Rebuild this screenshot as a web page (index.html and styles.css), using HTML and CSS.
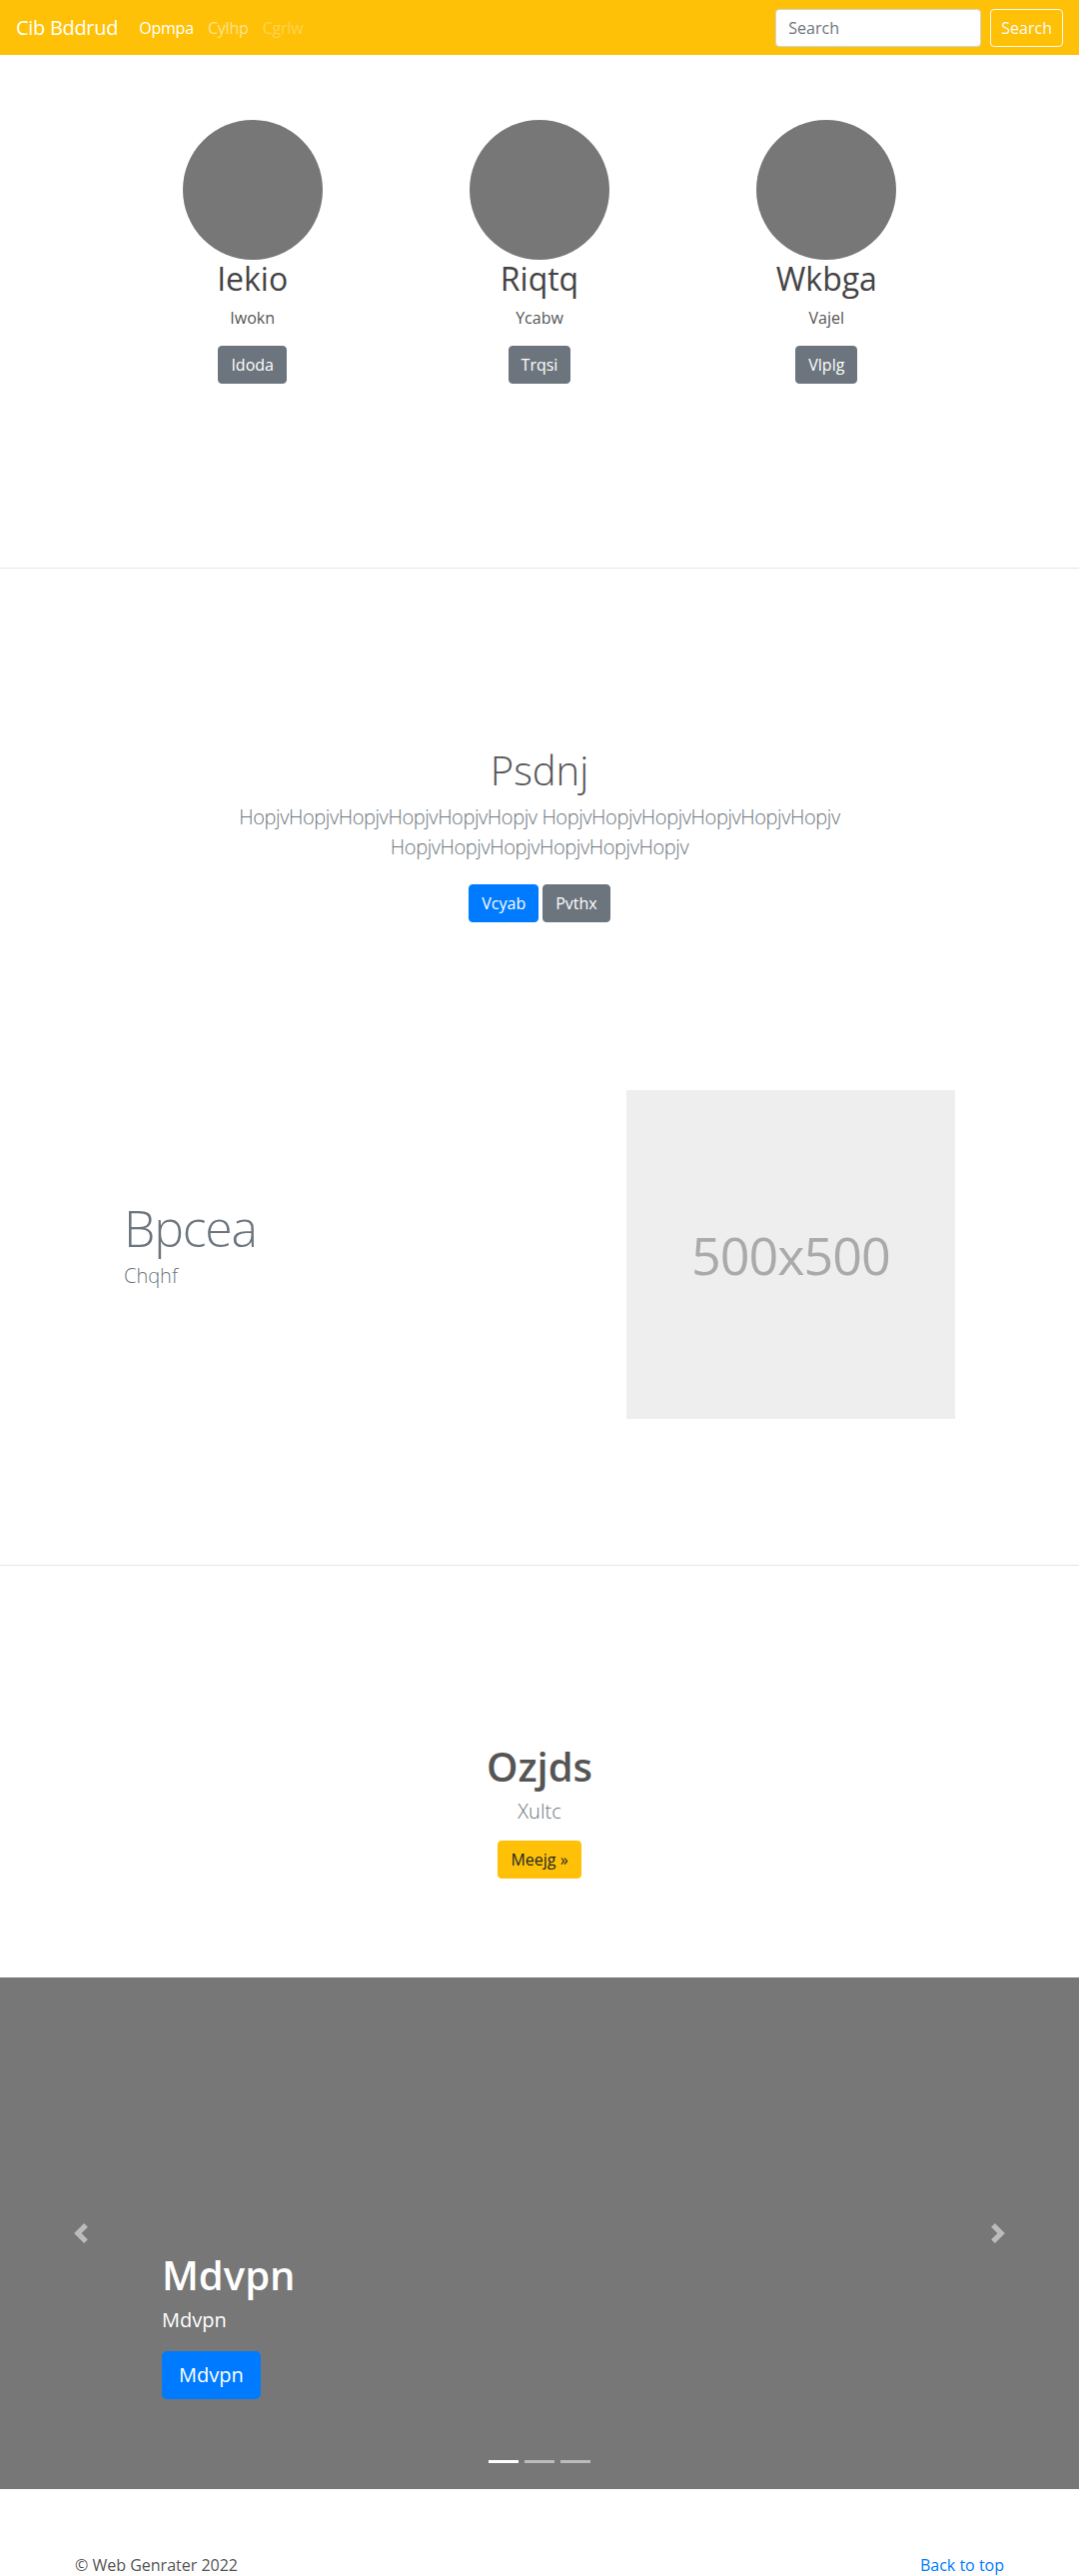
FILE: index.html
```html
<!DOCTYPE html>
<html lang="en">
<head>
<meta charset="utf-8">
<title>Cib Bddrud</title>
<link rel="stylesheet" href="styles.css">
</head>
<body>
<header class="navbar">
  <a class="brand" href="#">Cib Bddrud</a>
  <nav class="nav">
    <a class="nav-link active" href="#">Opmpa</a>
    <a class="nav-link" href="#">Cylhp</a>
    <a class="nav-link disabled" href="#">Cgrlw</a>
  </nav>
  <form class="search">
    <input class="search-input" type="text" placeholder="Search">
    <button class="btn btn-outline" type="button">Search</button>
  </form>
</header>

<section class="team">
  <div class="wrap team-row">
    <div class="member">
      <div class="avatar"></div>
      <h2 class="member-name">Iekio</h2>
      <p class="member-role">Iwokn</p>
      <a class="btn btn-secondary" href="#">Idoda</a>
    </div>
    <div class="member">
      <div class="avatar"></div>
      <h2 class="member-name">Riqtq</h2>
      <p class="member-role">Ycabw</p>
      <a class="btn btn-secondary" href="#">Trqsi</a>
    </div>
    <div class="member">
      <div class="avatar"></div>
      <h2 class="member-name">Wkbga</h2>
      <p class="member-role">Vajel</p>
      <a class="btn btn-secondary" href="#">Vlplg</a>
    </div>
  </div>
</section>

<section class="intro">
  <div class="wrap">
    <h1 class="intro-title">Psdnj</h1>
    <p class="lead intro-lead">HopjvHopjvHopjvHopjvHopjvHopjv HopjvHopjvHopjvHopjvHopjvHopjv HopjvHopjvHopjvHopjvHopjvHopjv</p>
    <div class="intro-actions">
      <a class="btn btn-primary" href="#">Vcyab</a>
      <a class="btn btn-secondary" href="#">Pvthx</a>
    </div>
    <div class="featurette">
      <div class="featurette-text">
        <h2 class="featurette-heading">Bpcea</h2>
        <p class="lead muted">Chqhf</p>
      </div>
      <div class="featurette-media">
        <div class="placeholder"><span>500x500</span></div>
      </div>
    </div>
  </div>
</section>

<section class="cta">
  <h1 class="cta-title">Ozjds</h1>
  <p class="lead muted cta-lead">Xultc</p>
  <a class="btn btn-warning" href="#">Meejg »</a>
</section>

<section class="carousel">
  <div class="carousel-caption">
    <h1 class="caption-title">Mdvpn</h1>
    <p class="caption-text">Mdvpn</p>
    <a class="btn btn-primary btn-lg" href="#">Mdvpn</a>
  </div>
  <a class="control control-prev" href="#" aria-label="Previous">
    <svg viewBox="0 0 8 8" width="20" height="20"><path fill="#fff" d="M5.25 0l-4 4 4 4 1.5-1.5L4.25 4l2.5-2.5L5.25 0z"/></svg>
  </a>
  <a class="control control-next" href="#" aria-label="Next">
    <svg viewBox="0 0 8 8" width="20" height="20"><path fill="#fff" d="M2.75 0l-1.5 1.5L3.75 4l-2.5 2.5L2.75 8l4-4-4-4z"/></svg>
  </a>
  <ol class="indicators">
    <li class="indicator on"></li>
    <li class="indicator"></li>
    <li class="indicator"></li>
  </ol>
</section>

<footer class="footer">
  <p class="copy">© Web Genrater 2022</p>
  <a class="back" href="#">Back to top</a>
</footer>
</body>
</html>
```

FILE: styles.css
```css
* { box-sizing: border-box; }

html, body {
  margin: 0;
  padding: 0;
}

body {
  font-family: "Open Sans", "Noto Sans", "DejaVu Sans", sans-serif;
  font-size: 16px;
  line-height: 1.5;
  color: #444;
  background: #fff;
}

a { text-decoration: none; }

h1, h2, p { margin: 0; }

.wrap {
  width: 862px;
  margin: 0 auto;
}

/* buttons */
.btn {
  display: inline-block;
  font-size: 16px;
  line-height: 24px;
  padding: 6px 12px;
  border: 1px solid transparent;
  border-radius: 4px;
  color: #fff;
  font-family: inherit;
  cursor: pointer;
}
.btn-secondary { background: #6c757d; border-color: #6c757d; }
.btn-primary { background: #007bff; border-color: #007bff; }
.btn-warning { background: #ffc107; border-color: #ffc107; color: #212529; }
.btn-lg { font-size: 20px; line-height: 30px; padding: 8px 16px; border-radius: 5px; }
.btn-outline { background: transparent; border-color: #f8f9fa; color: #f8f9fa; }

.lead {
  font-size: 20px;
  font-weight: 300;
  line-height: 30px;
}
.muted { color: #6c757d; }

/* navbar */
.navbar {
  height: 55px;
  background: #ffc107;
  display: flex;
  align-items: center;
  padding: 0 16px;
}
.brand {
  color: #fff;
  font-size: 20px;
  line-height: 30px;
  margin-right: 14px;
  letter-spacing: -0.3px;
}
.nav {
  display: flex;
  flex: 1;
}
.nav-link {
  color: rgba(255, 255, 255, 0.55);
  padding: 0 7px;
  font-size: 16px;
  letter-spacing: -0.2px;
}
.nav-link.active { color: #fff; }
.nav-link.disabled { color: rgba(255, 255, 255, 0.3); }
.search {
  display: flex;
  align-items: center;
  gap: 9px;
}
.search-input {
  width: 206px;
  height: 38px;
  padding: 6px 12px;
  font-size: 16px;
  font-family: inherit;
  border: 1px solid #ced4da;
  border-radius: 4px;
  color: #495057;
  background: #fff;
}
.search-input::placeholder { color: #6c757d; }
.search .btn { height: 38px; padding: 6px 10px; }

/* team */
.team {
  height: 514px;
  padding-top: 65px;
  border-bottom: 1px solid #e5e5e5;
}
.team-row {
  display: grid;
  grid-template-columns: repeat(3, 1fr);
}
.member {
  display: flex;
  flex-direction: column;
  align-items: center;
  text-align: center;
}
.avatar {
  width: 140px;
  height: 140px;
  border-radius: 50%;
  background: #777;
}
.member-name {
  font-size: 32px;
  font-weight: 400;
  line-height: 38px;
  margin-bottom: 8px;
  color: #444;
}
.member-role {
  margin-bottom: 16px;
  color: #555;
}

/* intro */
.intro {
  padding-top: 178px;
  padding-bottom: 146px;
  border-bottom: 1px solid #e5e5e5;
}
.intro-title {
  text-align: center;
  font-size: 40px;
  font-weight: 300;
  line-height: 48px;
  color: #555;
  margin-bottom: 8px;
}
.intro-lead {
  text-align: center;
  color: #6c757d;
  max-width: 720px;
  margin: 0 auto 22px;
  letter-spacing: -0.4px;
}
.intro-actions {
  display: flex;
  justify-content: center;
  gap: 4px;
}
.featurette {
  margin-top: 168px;
  display: grid;
  grid-template-columns: 7fr 5fr;
  align-items: center;
}
.featurette-text { padding: 0 15px; }
.featurette-heading {
  font-size: 50px;
  font-weight: 300;
  line-height: 50px;
  letter-spacing: -1.2px;
  color: #6c757d;
  margin-bottom: 8px;
}
.featurette-text .lead { margin-bottom: 16px; }
.featurette-media { padding: 0 15px; }
.placeholder {
  width: 329px;
  height: 329px;
  background: #eee;
  display: flex;
  align-items: center;
  justify-content: center;
  color: #aaa;
  font-size: 52px;
  font-weight: 400;
  letter-spacing: -1px;
}

/* cta */
.cta {
  padding-top: 177px;
  padding-bottom: 99px;
  text-align: center;
}
.cta-title {
  font-size: 40px;
  font-weight: 600;
  line-height: 48px;
  color: #555;
  margin-bottom: 6px;
}
.cta-lead { margin-bottom: 14px; }

/* carousel */
.carousel {
  position: relative;
  height: 512px;
  background: #777;
}
.carousel-caption {
  position: absolute;
  left: 162px;
  right: 162px;
  bottom: 90px;
  color: #fff;
}
.caption-title {
  font-size: 40px;
  font-weight: 600;
  line-height: 48px;
  margin-bottom: 6px;
}
.caption-text {
  font-size: 20px;
  line-height: 30px;
  margin-bottom: 16px;
}
.control {
  position: absolute;
  top: 0;
  bottom: 0;
  width: 162px;
  display: flex;
  align-items: center;
  justify-content: center;
  opacity: 0.5;
}
.control-prev { left: 0; }
.control-next { right: 0; }
.indicators {
  position: absolute;
  left: 0;
  right: 0;
  bottom: 26px;
  margin: 0;
  padding: 0;
  list-style: none;
  display: flex;
  justify-content: center;
  gap: 6px;
}
.indicator {
  width: 30px;
  height: 3px;
  background: #fff;
  opacity: 0.5;
}
.indicator.on { opacity: 1; }

/* footer */
.footer {
  width: 930px;
  margin: 0 auto;
  padding-top: 64px;
  padding-bottom: 16px;
  display: flex;
  justify-content: space-between;
  color: #555;
}
.back { color: #007bff; }
```
